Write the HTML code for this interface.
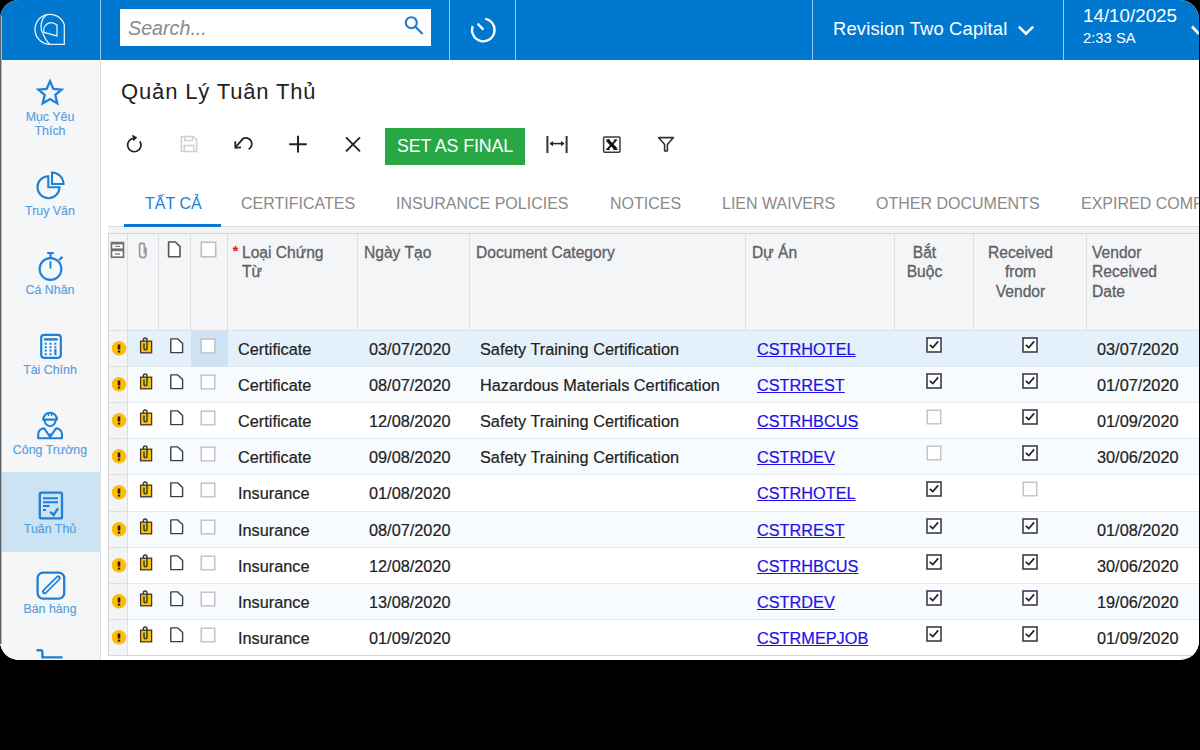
<!DOCTYPE html>
<html><head><meta charset="utf-8">
<style>
*{box-sizing:border-box;margin:0;padding:0}
html,body{width:1200px;height:750px;background:#000;overflow:hidden;font-family:"Liberation Sans",sans-serif}
.app{position:absolute;left:0;top:0;width:1199px;height:660px;border-radius:19px;overflow:hidden;background:#fff}
.abs{position:absolute}
.top{position:absolute;left:0;top:0;width:1199px;height:60px;background:#0078cf}
.vd{position:absolute;top:0;width:1px;height:60px;background:rgba(255,255,255,.6)}
.search{position:absolute;left:120px;top:9px;width:311px;height:37px;background:#fff}
.search span{position:absolute;left:8px;top:7.6px;font-size:19.7px;font-style:italic;color:#8a8a8a;white-space:nowrap}
.side{position:absolute;left:0;top:60px;width:101px;height:600px;background:#f5f6f8;border-right:1.5px solid #dcdfe4}
.si{position:absolute;left:0;width:100px;text-align:center;color:#559fdd;font-size:12.4px;line-height:14px;-webkit-text-stroke:0.15px #559fdd}
.main{position:absolute;left:101px;top:60px;width:1098px;height:600px;background:#fff}
.title{position:absolute;left:121px;top:79px;font-size:22px;letter-spacing:0.85px;color:#222;white-space:nowrap}
.btn{position:absolute;left:385px;top:128px;width:140px;height:37px;background:#28a745;color:#fff;font-size:17.8px;line-height:37px;text-align:center;white-space:nowrap;letter-spacing:-0.1px}
.tab{position:absolute;top:194.8px;font-size:16px;color:#8a8a8a;white-space:nowrap}
.hc{position:absolute;font-size:15.6px;color:#5e6064;line-height:19.4px;white-space:nowrap;-webkit-text-stroke:0.3px #5e6064}
.cell{position:absolute;font-size:16.3px;color:#222;white-space:nowrap;-webkit-text-stroke:0.2px #222}
.lnk{color:#1f10e8;text-decoration:underline;-webkit-text-stroke:0.2px #1f10e8}

</style></head>
<body>
<div class="app">
 <div class="top">
  <div class="vd" style="left:99.5px;width:1.5px"></div>
  <svg class="abs" style="left:32px;top:11px" width="36" height="36" viewBox="0 0 36 36">
   <path d="M32.3 13.8 A15 15 0 1 0 18 33.3 L32.3 33.3 Z" fill="none" stroke="#e6f0fa" stroke-width="1.3"/>
   <path d="M15 3.6 C8.6 7.5 7.6 17.5 11 22.5 C12.6 26.5 14.6 30.5 17.6 33.2" fill="none" stroke="#e6f0fa" stroke-width="1.3"/>
   <path d="M25 14.23 A7.63 7.63 0 0 0 12 21.5 L25 25 Z" fill="none" stroke="#e6f0fa" stroke-width="1.3"/>
  </svg>
  <div class="search"><span>Search...</span>
   <svg class="abs" style="left:282px;top:7px" width="24" height="24" viewBox="0 0 24 24"><circle cx="9.3" cy="6.7" r="5.5" fill="none" stroke="#1a7bcf" stroke-width="2.1"/><path d="M13.2 10.6 L20.6 18" stroke="#1a7bcf" stroke-width="2.1"/></svg>
  </div>
  <div class="vd" style="left:449px"></div>
  <svg class="abs" style="left:468px;top:14px" width="30" height="32" viewBox="0 0 30 32"><path d="M17.26 4.87 A11.3 11.3 0 1 1 4.68 12.14" fill="none" stroke="#fff" stroke-width="2.3"/><path d="M9.6 9.6 L15.4 15.6" stroke="#fff" stroke-width="2.3"/></svg>
  <div class="vd" style="left:515px"></div>
  <div class="vd" style="left:812px"></div>
  <div class="vd" style="left:1063px"></div>
  <div class="abs" style="left:833px;top:18px;font-size:18.4px;letter-spacing:0.15px;color:#fff;white-space:nowrap">Revision Two Capital</div>
  <svg class="abs" style="left:1016px;top:23px" width="20" height="14" viewBox="0 0 20 14"><path d="M2.8 3.6 L10 10.6 L17.2 3.6" fill="none" stroke="#fff" stroke-width="2.6"/></svg>
  <div class="abs" style="left:1083px;top:5px;font-size:18.8px;color:#fff;white-space:nowrap">14/10/2025</div>
  <div class="abs" style="left:1083px;top:29.5px;font-size:14.8px;color:#fff;white-space:nowrap">2:33 SA</div>
  <svg class="abs" style="left:1188px;top:22px" width="14" height="16" viewBox="0 0 14 16"><path d="M4 4.5 L11 12" fill="none" stroke="#fff" stroke-width="2.6"/></svg>
 </div>
 <div class="side"></div>
<svg class="abs" style="left:35.3px;top:78.8px" width="30" height="28" viewBox="0 0 30 28"><path d="M15 2.2 L18.4 9.9 L26.6 10.6 L20.3 16 L22.3 24.4 L15 20 L7.7 24.4 L9.7 16 L3.4 10.6 L11.6 9.9 Z" fill="none" stroke="#1e80d6" stroke-width="2.3" stroke-linejoin="miter"/></svg>
<div class="si" style="top:110px">Mục Yêu<br>Thích</div>
<svg class="abs" style="left:34px;top:168px" width="34" height="34" viewBox="0 0 34 34"><path d="M14.3 8.2 A11 11 0 1 0 25.5 19.3 L14.3 19.3 Z" fill="none" stroke="#1e80d6" stroke-width="2.1"/><path d="M18 4.5 A11.5 11.5 0 0 1 29.5 16 L18 16 Z" fill="none" stroke="#1e80d6" stroke-width="2.1"/></svg>
<div class="si" style="top:204px">Truy Vân</div>
<svg class="abs" style="left:35px;top:250px" width="32" height="32" viewBox="0 0 32 32"><circle cx="15.5" cy="19" r="10.9" fill="none" stroke="#1e80d6" stroke-width="2.1"/><path d="M12.2 3 H18.8 M15.5 3 V8" stroke="#1e80d6" stroke-width="2.2" fill="none"/><path d="M15.5 11.2 V18.6" stroke="#1e80d6" stroke-width="1.9"/><path d="M24.2 10 L27.4 6.8" stroke="#1e80d6" stroke-width="2.4"/></svg>
<div class="si" style="top:283px">Cá Nhân</div>
<svg class="abs" style="left:35px;top:330px" width="32" height="32" viewBox="0 0 32 32"><rect x="6.2" y="4.8" width="19.6" height="23" rx="3" fill="none" stroke="#1e80d6" stroke-width="2.2"/><rect x="9" y="8.2" width="13.8" height="2.4" fill="#1e80d6"/><rect x="9.700000000000003" y="12.75" width="2" height="2" fill="#1e80d6"/><rect x="9.700000000000003" y="16.19999999999999" width="2" height="2" fill="#1e80d6"/><rect x="9.700000000000003" y="19.600000000000023" width="2" height="2" fill="#1e80d6"/><rect x="9.700000000000003" y="23.19999999999999" width="2" height="2" fill="#1e80d6"/><rect x="14.5" y="12.75" width="2" height="2" fill="#1e80d6"/><rect x="14.5" y="16.19999999999999" width="2" height="2" fill="#1e80d6"/><rect x="14.5" y="19.600000000000023" width="2" height="2" fill="#1e80d6"/><rect x="14.5" y="23.19999999999999" width="2" height="2" fill="#1e80d6"/><rect x="19.299999999999997" y="12.75" width="2" height="2" fill="#1e80d6"/><rect x="19.299999999999997" y="16.19999999999999" width="2" height="2" fill="#1e80d6"/><rect x="19.299999999999997" y="19.100000000000023" width="2.2" height="6" fill="#1e80d6"/></svg>
<div class="si" style="top:363px">Tài Chính</div>
<svg class="abs" style="left:34px;top:408px" width="32" height="34" viewBox="0 0 32 34"><path d="M9.2 11.6 A6.9 6.9 0 0 1 23 11.6 Z" fill="none" stroke="#1e80d6" stroke-width="2.1" stroke-linejoin="round"/><path d="M14.6 4.4 V8 M17.6 4.4 V8" stroke="#1e80d6" stroke-width="1.4"/><path d="M10.6 12 A5.5 6.2 0 0 0 21.6 12" fill="none" stroke="#1e80d6" stroke-width="2"/><path d="M4.2 30.2 V26 A6 5.6 0 0 1 10.2 20.4 L16.1 29 L22 20.4 A6 5.6 0 0 1 28 26 V30.2 Z" fill="none" stroke="#1e80d6" stroke-width="2.1" stroke-linejoin="round"/><path d="M16.1 24.5 L14.6 27.8 L16.1 30 L17.6 27.8 Z" fill="#1e80d6"/></svg>
<div class="si" style="top:443px">Công Trường</div>
<div class="abs" style="left:0;top:472px;width:100px;height:80px;background:#cce3f4"></div>
<svg class="abs" style="left:35px;top:488px" width="32" height="34" viewBox="0 0 32 34"><rect x="4.8" y="4.6" width="22.2" height="25.8" rx="1.5" fill="none" stroke="#1e80d6" stroke-width="2.3"/><path d="M8 10.2 H23 M8 14.2 H23 M8 18 H14.6 M8 22 H11" stroke="#1e80d6" stroke-width="2"/><path d="M15.2 23.8 L18.6 27 L23 20.4" fill="none" stroke="#1e80d6" stroke-width="2.4"/></svg>
<div class="si" style="top:522px">Tuân Thủ</div>
<svg class="abs" style="left:34px;top:568px" width="34" height="34" viewBox="0 0 34 34"><rect x="3.6" y="4.6" width="26.6" height="26" rx="5.5" fill="none" stroke="#1e80d6" stroke-width="2.3"/><path d="M10.6 23.6 L24.2 10" stroke="#1e80d6" stroke-width="5.2" stroke-linecap="round"/><path d="M10.9 23.3 L23.9 10.3" stroke="#f5f6f8" stroke-width="1.8" stroke-linecap="round"/></svg>
<div class="si" style="top:602px">Bán hàng</div>
<svg class="abs" style="left:34px;top:646px" width="34" height="20" viewBox="0 0 34 20"><path d="M2.5 4.2 H6.6 Q8.4 4.2 8.4 6 V11.4 H28.6" fill="none" stroke="#1e80d6" stroke-width="2.4"/></svg>
 <div class="title">Quản Lý Tuân Thủ</div>
 <svg class="abs" style="left:124px;top:133px" width="22" height="22" viewBox="0 0 22 22"><path d="M15.85 8.25 A6.7 6.7 0 1 1 9.6 5.34 L11 5" fill="none" stroke="#222" stroke-width="1.7"/><path d="M8.2 1.6 L13.2 4.4 L9.4 8.2 Z" fill="#222"/></svg>
 <svg class="abs" style="left:179px;top:134px" width="20" height="20" viewBox="0 0 20 20"><path d="M2.4 2.4 H14.2 L17.6 5.8 V17.6 H2.4 Z" fill="none" stroke="#cfcfcf" stroke-width="1.5"/><path d="M5.6 2.4 V6.6 H13.6 V2.4 M5.2 17.6 V11.6 H14.8 V17.6" fill="none" stroke="#cfcfcf" stroke-width="1.5"/></svg>
 <svg class="abs" style="left:232px;top:134px" width="24" height="20" viewBox="0 0 24 20"><path d="M16.6 15.3 A6 6 0 1 0 10.8 4.8 L3.8 13" fill="none" stroke="#222" stroke-width="1.8"/><path d="M3.2 7.4 L3.4 13.8 L9 13.4" fill="none" stroke="#222" stroke-width="1.8"/></svg>
 <svg class="abs" style="left:288px;top:135px" width="20" height="19" viewBox="0 0 20 19"><path d="M1.2 9.2 H18.8 M10 0.8 V17.6" stroke="#222" stroke-width="2"/></svg>
 <svg class="abs" style="left:344px;top:136px" width="18" height="17" viewBox="0 0 18 17"><path d="M2 1.4 L16 15.4 M16 1.4 L2 15.4" stroke="#222" stroke-width="1.9"/></svg>
 <div class="btn">SET AS FINAL</div>
 <svg class="abs" style="left:545px;top:135px" width="24" height="19" viewBox="0 0 24 19"><path d="M2.4 1 V18 M21.6 1 V18" stroke="#333" stroke-width="2"/><path d="M5 8.6 H19" stroke="#222" stroke-width="1.5"/><path d="M4.6 8.6 L8 6 V11.2 Z M19.4 8.6 L16 6 V11.2 Z" fill="#222"/></svg>
 <svg class="abs" style="left:601px;top:135px" width="22" height="19" viewBox="0 0 22 19"><rect x="2.6" y="1.9" width="16.4" height="15.4" rx="1" fill="#fff" stroke="#3a3a44" stroke-width="1.5"/><path d="M6.4 5.2 L15 14.2" stroke="#111" stroke-width="3.2"/><path d="M15 5.2 L6.6 14.2" stroke="#111" stroke-width="1.8"/><path d="M5 5 H9 M12.6 5 H16.4 M5 14.4 H8.8 M12.6 14.4 H16.6" stroke="#111" stroke-width="1.2"/></svg>
 <svg class="abs" style="left:656px;top:135px" width="20" height="18" viewBox="0 0 20 18"><path d="M2.6 2.6 H17.4 L11.4 9.6 V16 H8.6 V9.6 Z" fill="none" stroke="#333" stroke-width="1.6" stroke-linejoin="round"/></svg>
 <div class="tab" style="left:145px;color:#1a7fd4">TẤT CẢ</div>
 <div class="tab" style="left:241px">CERTIFICATES</div>
 <div class="tab" style="left:396px">INSURANCE POLICIES</div>
 <div class="tab" style="left:610px">NOTICES</div>
 <div class="tab" style="left:722px">LIEN WAIVERS</div>
 <div class="tab" style="left:876px">OTHER DOCUMENTS</div>
 <div class="tab" style="left:1081px">EXPIRED COMPLIANCE</div>
 <div class="abs" style="left:108px;top:226px;width:1091px;height:1px;background:#d8dbe0"></div>
 <div class="abs" style="left:124px;top:224px;width:97px;height:3px;background:#0f74cc"></div>
 <div class="abs" style="left:108px;top:227px;width:1091px;height:6px;background:#f3f4f6"></div>
<div class="abs" style="left:108px;top:233px;width:1091px;height:98px;background:#f4f5f7;border-top:1.5px solid #d3d6da;border-bottom:1px solid #dcdfe3;border-left:1.5px solid #d3d6da"></div>
<div class="abs" style="left:127px;top:234px;width:1px;height:96px;background:#dcdfe3"></div>
<div class="abs" style="left:158px;top:234px;width:1px;height:96px;background:#dcdfe3"></div>
<div class="abs" style="left:190px;top:234px;width:1px;height:96px;background:#dcdfe3"></div>
<div class="abs" style="left:227px;top:234px;width:1px;height:96px;background:#dcdfe3"></div>
<div class="abs" style="left:357px;top:234px;width:1px;height:96px;background:#dcdfe3"></div>
<div class="abs" style="left:469px;top:234px;width:1px;height:96px;background:#dcdfe3"></div>
<div class="abs" style="left:745px;top:234px;width:1px;height:96px;background:#dcdfe3"></div>
<div class="abs" style="left:894px;top:234px;width:1px;height:96px;background:#dcdfe3"></div>
<div class="abs" style="left:973px;top:234px;width:1px;height:96px;background:#dcdfe3"></div>
<div class="abs" style="left:1086px;top:234px;width:1px;height:96px;background:#dcdfe3"></div>
<svg class="abs" style="left:110px;top:241px" width="16" height="18" viewBox="0 0 16 18"><rect x="1.5" y="1.6" width="12" height="14.6" fill="#fff" stroke="#707070" stroke-width="1.7"/><rect x="1.5" y="1" width="12" height="2.4" fill="#707070"/><rect x="1.5" y="7.4" width="12" height="2.8" fill="#707070"/><path d="M5 5.4 H10 M5 13 H10" stroke="#888" stroke-width="1.3"/></svg>
<svg class="abs" style="left:136px;top:241px" width="14" height="18" viewBox="0 0 14 18"><path d="M10 6.4 V13.4 A3.2 3.2 0 0 1 3.6 13.4 V4.6 A2.4 2.4 0 0 1 8.4 4.6 V12.4" fill="none" stroke="#9a98a0" stroke-width="1.7"/></svg>
<svg class="abs" style="left:166px;top:240px" width="17" height="19" viewBox="0 0 17 19"><path d="M2.6 2 H9.4 L14 6.6 V16.8 H2.6 Z" fill="#fff" stroke="#555" stroke-width="1.6" stroke-linejoin="round"/></svg>
<svg class="abs" style="left:200px;top:241px" width="17" height="17" viewBox="0 0 17 17"><rect x="1.3" y="1.3" width="14.4" height="14.4" fill="#fff" stroke="#bdbdbd" stroke-width="1.6"/></svg>
<div class="hc" style="left:242px;top:242.7px">Loại Chứng<br>Từ</div><div class="abs" style="left:232.5px;top:242px;color:#e8141c;font-size:15px;font-weight:bold">*</div>
<div class="hc" style="left:364px;top:242.7px">Ngày Tạo</div>
<div class="hc" style="left:476px;top:242.7px">Document Category</div>
<div class="hc" style="left:752px;top:242.7px">Dự Án</div>
<div class="hc" style="left:894px;width:61px;text-align:center;top:242.7px">Bắt<br>Buộc</div>
<div class="hc" style="left:973px;width:95px;text-align:center;top:242.7px">Received<br>from<br>Vendor</div>
<div class="hc" style="left:1092px;top:242.7px">Vendor<br>Received<br>Date</div>
<div class="abs" style="left:108px;top:331px;width:1091px;height:36px;background:#e5f1fa;border-bottom:1px solid #e3ebf2"></div>
<div class="abs" style="left:108px;top:331px;width:20px;height:36px;background:#f3f4f6;border-right:1px solid #dcdfe3;border-bottom:1px solid #dcdfe3;border-left:1.5px solid #d3d6da"></div>
<div class="abs" style="left:191px;top:331px;width:37px;height:36px;background:#cde2f2"></div>
<svg class="abs" style="left:110.5px;top:340.3px" width="16" height="16" viewBox="0 0 16 16"><circle cx="8" cy="8.3" r="7.3" fill="#fcbd08"/><rect x="6.7" y="4.5" width="2.6" height="5" fill="#2a1a10"/><rect x="6.8" y="10.6" width="2.4" height="2" fill="#2a1a10"/></svg>
<svg class="abs" style="left:137.5px;top:336.3px" width="16" height="18" viewBox="0 0 16 18"><rect x="2.6" y="5.2" width="11" height="11.6" fill="#f9c312" stroke="#4a3238" stroke-width="1.3"/><path d="M5.4 5.2 V3.8 A1.8 1.8 0 0 1 9 3.8 V12.2 A1.5 1.5 0 0 1 6 12.2 V7.6" fill="none" stroke="#34401f" stroke-width="1.5"/></svg>
<svg class="abs" style="left:168px;top:337.3px" width="16" height="18" viewBox="0 0 16 18"><path d="M2.8 1.9 H9.8 L14.6 6.4 V15.6 H2.8 Z" fill="#fff" stroke="#3d3d46" stroke-width="1.4" stroke-linejoin="round"/></svg>
<svg class="abs" style="left:200px;top:337.5px" width="16" height="16" viewBox="0 0 16 16"><rect x="1.2" y="1.2" width="13.6" height="13.6" fill="#fff" stroke="#babcc0" stroke-width="1.3"/></svg>
<div class="cell" style="left:238px;top:340.3px">Certificate</div>
<div class="cell" style="left:369px;top:340.3px">03/07/2020</div>
<div class="cell" style="left:480px;top:340.3px">Safety Training Certification</div>
<div class="cell lnk" style="left:757px;top:340.3px">CSTRHOTEL</div>
<svg class="abs" style="left:926px;top:337px" width="16" height="16" viewBox="0 0 16 16"><rect x="1" y="1" width="14" height="14" fill="#fff" stroke="#3c3c4a" stroke-width="1.6"/><path d="M3.8 7.8 L6.8 10.6 L12.2 4.4" fill="none" stroke="#222" stroke-width="1.7"/></svg>
<svg class="abs" style="left:1021.5px;top:337px" width="16" height="16" viewBox="0 0 16 16"><rect x="1" y="1" width="14" height="14" fill="#fff" stroke="#3c3c4a" stroke-width="1.6"/><path d="M3.8 7.8 L6.8 10.6 L12.2 4.4" fill="none" stroke="#222" stroke-width="1.7"/></svg>
<div class="cell" style="left:1097px;top:340.3px">03/07/2020</div>
<div class="abs" style="left:108px;top:367px;width:1091px;height:36px;background:#f7fbfe;border-bottom:1px solid #e3ebf2"></div>
<div class="abs" style="left:108px;top:367px;width:20px;height:36px;background:#f3f4f6;border-right:1px solid #dcdfe3;border-bottom:1px solid #dcdfe3;border-left:1.5px solid #d3d6da"></div>
<svg class="abs" style="left:110.5px;top:376.3px" width="16" height="16" viewBox="0 0 16 16"><circle cx="8" cy="8.3" r="7.3" fill="#fcbd08"/><rect x="6.7" y="4.5" width="2.6" height="5" fill="#2a1a10"/><rect x="6.8" y="10.6" width="2.4" height="2" fill="#2a1a10"/></svg>
<svg class="abs" style="left:137.5px;top:372.3px" width="16" height="18" viewBox="0 0 16 18"><rect x="2.6" y="5.2" width="11" height="11.6" fill="#f9c312" stroke="#4a3238" stroke-width="1.3"/><path d="M5.4 5.2 V3.8 A1.8 1.8 0 0 1 9 3.8 V12.2 A1.5 1.5 0 0 1 6 12.2 V7.6" fill="none" stroke="#34401f" stroke-width="1.5"/></svg>
<svg class="abs" style="left:168px;top:373.3px" width="16" height="18" viewBox="0 0 16 18"><path d="M2.8 1.9 H9.8 L14.6 6.4 V15.6 H2.8 Z" fill="#fff" stroke="#3d3d46" stroke-width="1.4" stroke-linejoin="round"/></svg>
<svg class="abs" style="left:200px;top:373.5px" width="16" height="16" viewBox="0 0 16 16"><rect x="1.2" y="1.2" width="13.6" height="13.6" fill="#fff" stroke="#babcc0" stroke-width="1.3"/></svg>
<div class="cell" style="left:238px;top:376.3px">Certificate</div>
<div class="cell" style="left:369px;top:376.3px">08/07/2020</div>
<div class="cell" style="left:480px;top:376.3px">Hazardous Materials Certification</div>
<div class="cell lnk" style="left:757px;top:376.3px">CSTRREST</div>
<svg class="abs" style="left:926px;top:373px" width="16" height="16" viewBox="0 0 16 16"><rect x="1" y="1" width="14" height="14" fill="#fff" stroke="#3c3c4a" stroke-width="1.6"/><path d="M3.8 7.8 L6.8 10.6 L12.2 4.4" fill="none" stroke="#222" stroke-width="1.7"/></svg>
<svg class="abs" style="left:1021.5px;top:373px" width="16" height="16" viewBox="0 0 16 16"><rect x="1" y="1" width="14" height="14" fill="#fff" stroke="#3c3c4a" stroke-width="1.6"/><path d="M3.8 7.8 L6.8 10.6 L12.2 4.4" fill="none" stroke="#222" stroke-width="1.7"/></svg>
<div class="cell" style="left:1097px;top:376.3px">01/07/2020</div>
<div class="abs" style="left:108px;top:403px;width:1091px;height:36px;background:#ffffff;border-bottom:1px solid #e3ebf2"></div>
<div class="abs" style="left:108px;top:403px;width:20px;height:36px;background:#f3f4f6;border-right:1px solid #dcdfe3;border-bottom:1px solid #dcdfe3;border-left:1.5px solid #d3d6da"></div>
<svg class="abs" style="left:110.5px;top:412.3px" width="16" height="16" viewBox="0 0 16 16"><circle cx="8" cy="8.3" r="7.3" fill="#fcbd08"/><rect x="6.7" y="4.5" width="2.6" height="5" fill="#2a1a10"/><rect x="6.8" y="10.6" width="2.4" height="2" fill="#2a1a10"/></svg>
<svg class="abs" style="left:137.5px;top:408.3px" width="16" height="18" viewBox="0 0 16 18"><rect x="2.6" y="5.2" width="11" height="11.6" fill="#f9c312" stroke="#4a3238" stroke-width="1.3"/><path d="M5.4 5.2 V3.8 A1.8 1.8 0 0 1 9 3.8 V12.2 A1.5 1.5 0 0 1 6 12.2 V7.6" fill="none" stroke="#34401f" stroke-width="1.5"/></svg>
<svg class="abs" style="left:168px;top:409.3px" width="16" height="18" viewBox="0 0 16 18"><path d="M2.8 1.9 H9.8 L14.6 6.4 V15.6 H2.8 Z" fill="#fff" stroke="#3d3d46" stroke-width="1.4" stroke-linejoin="round"/></svg>
<svg class="abs" style="left:200px;top:409.5px" width="16" height="16" viewBox="0 0 16 16"><rect x="1.2" y="1.2" width="13.6" height="13.6" fill="#fff" stroke="#babcc0" stroke-width="1.3"/></svg>
<div class="cell" style="left:238px;top:412.3px">Certificate</div>
<div class="cell" style="left:369px;top:412.3px">12/08/2020</div>
<div class="cell" style="left:480px;top:412.3px">Safety Training Certification</div>
<div class="cell lnk" style="left:757px;top:412.3px">CSTRHBCUS</div>
<svg class="abs" style="left:926px;top:409px" width="16" height="16" viewBox="0 0 16 16"><rect x="1.2" y="1.2" width="13.6" height="13.6" fill="#fff" stroke="#babcc0" stroke-width="1.3"/></svg>
<svg class="abs" style="left:1021.5px;top:409px" width="16" height="16" viewBox="0 0 16 16"><rect x="1" y="1" width="14" height="14" fill="#fff" stroke="#3c3c4a" stroke-width="1.6"/><path d="M3.8 7.8 L6.8 10.6 L12.2 4.4" fill="none" stroke="#222" stroke-width="1.7"/></svg>
<div class="cell" style="left:1097px;top:412.3px">01/09/2020</div>
<div class="abs" style="left:108px;top:439px;width:1091px;height:36px;background:#f7fbfe;border-bottom:1px solid #e3ebf2"></div>
<div class="abs" style="left:108px;top:439px;width:20px;height:36px;background:#f3f4f6;border-right:1px solid #dcdfe3;border-bottom:1px solid #dcdfe3;border-left:1.5px solid #d3d6da"></div>
<svg class="abs" style="left:110.5px;top:448.3px" width="16" height="16" viewBox="0 0 16 16"><circle cx="8" cy="8.3" r="7.3" fill="#fcbd08"/><rect x="6.7" y="4.5" width="2.6" height="5" fill="#2a1a10"/><rect x="6.8" y="10.6" width="2.4" height="2" fill="#2a1a10"/></svg>
<svg class="abs" style="left:137.5px;top:444.3px" width="16" height="18" viewBox="0 0 16 18"><rect x="2.6" y="5.2" width="11" height="11.6" fill="#f9c312" stroke="#4a3238" stroke-width="1.3"/><path d="M5.4 5.2 V3.8 A1.8 1.8 0 0 1 9 3.8 V12.2 A1.5 1.5 0 0 1 6 12.2 V7.6" fill="none" stroke="#34401f" stroke-width="1.5"/></svg>
<svg class="abs" style="left:168px;top:445.3px" width="16" height="18" viewBox="0 0 16 18"><path d="M2.8 1.9 H9.8 L14.6 6.4 V15.6 H2.8 Z" fill="#fff" stroke="#3d3d46" stroke-width="1.4" stroke-linejoin="round"/></svg>
<svg class="abs" style="left:200px;top:445.5px" width="16" height="16" viewBox="0 0 16 16"><rect x="1.2" y="1.2" width="13.6" height="13.6" fill="#fff" stroke="#babcc0" stroke-width="1.3"/></svg>
<div class="cell" style="left:238px;top:448.3px">Certificate</div>
<div class="cell" style="left:369px;top:448.3px">09/08/2020</div>
<div class="cell" style="left:480px;top:448.3px">Safety Training Certification</div>
<div class="cell lnk" style="left:757px;top:448.3px">CSTRDEV</div>
<svg class="abs" style="left:926px;top:445px" width="16" height="16" viewBox="0 0 16 16"><rect x="1.2" y="1.2" width="13.6" height="13.6" fill="#fff" stroke="#babcc0" stroke-width="1.3"/></svg>
<svg class="abs" style="left:1021.5px;top:445px" width="16" height="16" viewBox="0 0 16 16"><rect x="1" y="1" width="14" height="14" fill="#fff" stroke="#3c3c4a" stroke-width="1.6"/><path d="M3.8 7.8 L6.8 10.6 L12.2 4.4" fill="none" stroke="#222" stroke-width="1.7"/></svg>
<div class="cell" style="left:1097px;top:448.3px">30/06/2020</div>
<div class="abs" style="left:108px;top:475px;width:1091px;height:37px;background:#ffffff;border-bottom:1px solid #e3ebf2"></div>
<div class="abs" style="left:108px;top:475px;width:20px;height:37px;background:#f3f4f6;border-right:1px solid #dcdfe3;border-bottom:1px solid #dcdfe3;border-left:1.5px solid #d3d6da"></div>
<svg class="abs" style="left:110.5px;top:484.3px" width="16" height="16" viewBox="0 0 16 16"><circle cx="8" cy="8.3" r="7.3" fill="#fcbd08"/><rect x="6.7" y="4.5" width="2.6" height="5" fill="#2a1a10"/><rect x="6.8" y="10.6" width="2.4" height="2" fill="#2a1a10"/></svg>
<svg class="abs" style="left:137.5px;top:480.3px" width="16" height="18" viewBox="0 0 16 18"><rect x="2.6" y="5.2" width="11" height="11.6" fill="#f9c312" stroke="#4a3238" stroke-width="1.3"/><path d="M5.4 5.2 V3.8 A1.8 1.8 0 0 1 9 3.8 V12.2 A1.5 1.5 0 0 1 6 12.2 V7.6" fill="none" stroke="#34401f" stroke-width="1.5"/></svg>
<svg class="abs" style="left:168px;top:481.3px" width="16" height="18" viewBox="0 0 16 18"><path d="M2.8 1.9 H9.8 L14.6 6.4 V15.6 H2.8 Z" fill="#fff" stroke="#3d3d46" stroke-width="1.4" stroke-linejoin="round"/></svg>
<svg class="abs" style="left:200px;top:481.5px" width="16" height="16" viewBox="0 0 16 16"><rect x="1.2" y="1.2" width="13.6" height="13.6" fill="#fff" stroke="#babcc0" stroke-width="1.3"/></svg>
<div class="cell" style="left:238px;top:484.3px">Insurance</div>
<div class="cell" style="left:369px;top:484.3px">01/08/2020</div>
<div class="cell lnk" style="left:757px;top:484.3px">CSTRHOTEL</div>
<svg class="abs" style="left:926px;top:481px" width="16" height="16" viewBox="0 0 16 16"><rect x="1" y="1" width="14" height="14" fill="#fff" stroke="#3c3c4a" stroke-width="1.6"/><path d="M3.8 7.8 L6.8 10.6 L12.2 4.4" fill="none" stroke="#222" stroke-width="1.7"/></svg>
<svg class="abs" style="left:1021.5px;top:481px" width="16" height="16" viewBox="0 0 16 16"><rect x="1.2" y="1.2" width="13.6" height="13.6" fill="#fff" stroke="#babcc0" stroke-width="1.3"/></svg>
<div class="abs" style="left:108px;top:512px;width:1091px;height:36px;background:#f7fbfe;border-bottom:1px solid #e3ebf2"></div>
<div class="abs" style="left:108px;top:512px;width:20px;height:36px;background:#f3f4f6;border-right:1px solid #dcdfe3;border-bottom:1px solid #dcdfe3;border-left:1.5px solid #d3d6da"></div>
<svg class="abs" style="left:110.5px;top:521.3px" width="16" height="16" viewBox="0 0 16 16"><circle cx="8" cy="8.3" r="7.3" fill="#fcbd08"/><rect x="6.7" y="4.5" width="2.6" height="5" fill="#2a1a10"/><rect x="6.8" y="10.6" width="2.4" height="2" fill="#2a1a10"/></svg>
<svg class="abs" style="left:137.5px;top:517.3px" width="16" height="18" viewBox="0 0 16 18"><rect x="2.6" y="5.2" width="11" height="11.6" fill="#f9c312" stroke="#4a3238" stroke-width="1.3"/><path d="M5.4 5.2 V3.8 A1.8 1.8 0 0 1 9 3.8 V12.2 A1.5 1.5 0 0 1 6 12.2 V7.6" fill="none" stroke="#34401f" stroke-width="1.5"/></svg>
<svg class="abs" style="left:168px;top:518.3px" width="16" height="18" viewBox="0 0 16 18"><path d="M2.8 1.9 H9.8 L14.6 6.4 V15.6 H2.8 Z" fill="#fff" stroke="#3d3d46" stroke-width="1.4" stroke-linejoin="round"/></svg>
<svg class="abs" style="left:200px;top:518.5px" width="16" height="16" viewBox="0 0 16 16"><rect x="1.2" y="1.2" width="13.6" height="13.6" fill="#fff" stroke="#babcc0" stroke-width="1.3"/></svg>
<div class="cell" style="left:238px;top:521.3px">Insurance</div>
<div class="cell" style="left:369px;top:521.3px">08/07/2020</div>
<div class="cell lnk" style="left:757px;top:521.3px">CSTRREST</div>
<svg class="abs" style="left:926px;top:518px" width="16" height="16" viewBox="0 0 16 16"><rect x="1" y="1" width="14" height="14" fill="#fff" stroke="#3c3c4a" stroke-width="1.6"/><path d="M3.8 7.8 L6.8 10.6 L12.2 4.4" fill="none" stroke="#222" stroke-width="1.7"/></svg>
<svg class="abs" style="left:1021.5px;top:518px" width="16" height="16" viewBox="0 0 16 16"><rect x="1" y="1" width="14" height="14" fill="#fff" stroke="#3c3c4a" stroke-width="1.6"/><path d="M3.8 7.8 L6.8 10.6 L12.2 4.4" fill="none" stroke="#222" stroke-width="1.7"/></svg>
<div class="cell" style="left:1097px;top:521.3px">01/08/2020</div>
<div class="abs" style="left:108px;top:548px;width:1091px;height:36px;background:#ffffff;border-bottom:1px solid #e3ebf2"></div>
<div class="abs" style="left:108px;top:548px;width:20px;height:36px;background:#f3f4f6;border-right:1px solid #dcdfe3;border-bottom:1px solid #dcdfe3;border-left:1.5px solid #d3d6da"></div>
<svg class="abs" style="left:110.5px;top:557.3px" width="16" height="16" viewBox="0 0 16 16"><circle cx="8" cy="8.3" r="7.3" fill="#fcbd08"/><rect x="6.7" y="4.5" width="2.6" height="5" fill="#2a1a10"/><rect x="6.8" y="10.6" width="2.4" height="2" fill="#2a1a10"/></svg>
<svg class="abs" style="left:137.5px;top:553.3px" width="16" height="18" viewBox="0 0 16 18"><rect x="2.6" y="5.2" width="11" height="11.6" fill="#f9c312" stroke="#4a3238" stroke-width="1.3"/><path d="M5.4 5.2 V3.8 A1.8 1.8 0 0 1 9 3.8 V12.2 A1.5 1.5 0 0 1 6 12.2 V7.6" fill="none" stroke="#34401f" stroke-width="1.5"/></svg>
<svg class="abs" style="left:168px;top:554.3px" width="16" height="18" viewBox="0 0 16 18"><path d="M2.8 1.9 H9.8 L14.6 6.4 V15.6 H2.8 Z" fill="#fff" stroke="#3d3d46" stroke-width="1.4" stroke-linejoin="round"/></svg>
<svg class="abs" style="left:200px;top:554.5px" width="16" height="16" viewBox="0 0 16 16"><rect x="1.2" y="1.2" width="13.6" height="13.6" fill="#fff" stroke="#babcc0" stroke-width="1.3"/></svg>
<div class="cell" style="left:238px;top:557.3px">Insurance</div>
<div class="cell" style="left:369px;top:557.3px">12/08/2020</div>
<div class="cell lnk" style="left:757px;top:557.3px">CSTRHBCUS</div>
<svg class="abs" style="left:926px;top:554px" width="16" height="16" viewBox="0 0 16 16"><rect x="1" y="1" width="14" height="14" fill="#fff" stroke="#3c3c4a" stroke-width="1.6"/><path d="M3.8 7.8 L6.8 10.6 L12.2 4.4" fill="none" stroke="#222" stroke-width="1.7"/></svg>
<svg class="abs" style="left:1021.5px;top:554px" width="16" height="16" viewBox="0 0 16 16"><rect x="1" y="1" width="14" height="14" fill="#fff" stroke="#3c3c4a" stroke-width="1.6"/><path d="M3.8 7.8 L6.8 10.6 L12.2 4.4" fill="none" stroke="#222" stroke-width="1.7"/></svg>
<div class="cell" style="left:1097px;top:557.3px">30/06/2020</div>
<div class="abs" style="left:108px;top:584px;width:1091px;height:36px;background:#f7fbfe;border-bottom:1px solid #e3ebf2"></div>
<div class="abs" style="left:108px;top:584px;width:20px;height:36px;background:#f3f4f6;border-right:1px solid #dcdfe3;border-bottom:1px solid #dcdfe3;border-left:1.5px solid #d3d6da"></div>
<svg class="abs" style="left:110.5px;top:593.3px" width="16" height="16" viewBox="0 0 16 16"><circle cx="8" cy="8.3" r="7.3" fill="#fcbd08"/><rect x="6.7" y="4.5" width="2.6" height="5" fill="#2a1a10"/><rect x="6.8" y="10.6" width="2.4" height="2" fill="#2a1a10"/></svg>
<svg class="abs" style="left:137.5px;top:589.3px" width="16" height="18" viewBox="0 0 16 18"><rect x="2.6" y="5.2" width="11" height="11.6" fill="#f9c312" stroke="#4a3238" stroke-width="1.3"/><path d="M5.4 5.2 V3.8 A1.8 1.8 0 0 1 9 3.8 V12.2 A1.5 1.5 0 0 1 6 12.2 V7.6" fill="none" stroke="#34401f" stroke-width="1.5"/></svg>
<svg class="abs" style="left:168px;top:590.3px" width="16" height="18" viewBox="0 0 16 18"><path d="M2.8 1.9 H9.8 L14.6 6.4 V15.6 H2.8 Z" fill="#fff" stroke="#3d3d46" stroke-width="1.4" stroke-linejoin="round"/></svg>
<svg class="abs" style="left:200px;top:590.5px" width="16" height="16" viewBox="0 0 16 16"><rect x="1.2" y="1.2" width="13.6" height="13.6" fill="#fff" stroke="#babcc0" stroke-width="1.3"/></svg>
<div class="cell" style="left:238px;top:593.3px">Insurance</div>
<div class="cell" style="left:369px;top:593.3px">13/08/2020</div>
<div class="cell lnk" style="left:757px;top:593.3px">CSTRDEV</div>
<svg class="abs" style="left:926px;top:590px" width="16" height="16" viewBox="0 0 16 16"><rect x="1" y="1" width="14" height="14" fill="#fff" stroke="#3c3c4a" stroke-width="1.6"/><path d="M3.8 7.8 L6.8 10.6 L12.2 4.4" fill="none" stroke="#222" stroke-width="1.7"/></svg>
<svg class="abs" style="left:1021.5px;top:590px" width="16" height="16" viewBox="0 0 16 16"><rect x="1" y="1" width="14" height="14" fill="#fff" stroke="#3c3c4a" stroke-width="1.6"/><path d="M3.8 7.8 L6.8 10.6 L12.2 4.4" fill="none" stroke="#222" stroke-width="1.7"/></svg>
<div class="cell" style="left:1097px;top:593.3px">19/06/2020</div>
<div class="abs" style="left:108px;top:620px;width:1091px;height:36px;background:#ffffff;border-bottom:1px solid #e3ebf2"></div>
<div class="abs" style="left:108px;top:620px;width:20px;height:36px;background:#f3f4f6;border-right:1px solid #dcdfe3;border-bottom:1px solid #dcdfe3;border-left:1.5px solid #d3d6da"></div>
<svg class="abs" style="left:110.5px;top:629.3px" width="16" height="16" viewBox="0 0 16 16"><circle cx="8" cy="8.3" r="7.3" fill="#fcbd08"/><rect x="6.7" y="4.5" width="2.6" height="5" fill="#2a1a10"/><rect x="6.8" y="10.6" width="2.4" height="2" fill="#2a1a10"/></svg>
<svg class="abs" style="left:137.5px;top:625.3px" width="16" height="18" viewBox="0 0 16 18"><rect x="2.6" y="5.2" width="11" height="11.6" fill="#f9c312" stroke="#4a3238" stroke-width="1.3"/><path d="M5.4 5.2 V3.8 A1.8 1.8 0 0 1 9 3.8 V12.2 A1.5 1.5 0 0 1 6 12.2 V7.6" fill="none" stroke="#34401f" stroke-width="1.5"/></svg>
<svg class="abs" style="left:168px;top:626.3px" width="16" height="18" viewBox="0 0 16 18"><path d="M2.8 1.9 H9.8 L14.6 6.4 V15.6 H2.8 Z" fill="#fff" stroke="#3d3d46" stroke-width="1.4" stroke-linejoin="round"/></svg>
<svg class="abs" style="left:200px;top:626.5px" width="16" height="16" viewBox="0 0 16 16"><rect x="1.2" y="1.2" width="13.6" height="13.6" fill="#fff" stroke="#babcc0" stroke-width="1.3"/></svg>
<div class="cell" style="left:238px;top:629.3px">Insurance</div>
<div class="cell" style="left:369px;top:629.3px">01/09/2020</div>
<div class="cell lnk" style="left:757px;top:629.3px">CSTRMEPJOB</div>
<svg class="abs" style="left:926px;top:626px" width="16" height="16" viewBox="0 0 16 16"><rect x="1" y="1" width="14" height="14" fill="#fff" stroke="#3c3c4a" stroke-width="1.6"/><path d="M3.8 7.8 L6.8 10.6 L12.2 4.4" fill="none" stroke="#222" stroke-width="1.7"/></svg>
<svg class="abs" style="left:1021.5px;top:626px" width="16" height="16" viewBox="0 0 16 16"><rect x="1" y="1" width="14" height="14" fill="#fff" stroke="#3c3c4a" stroke-width="1.6"/><path d="M3.8 7.8 L6.8 10.6 L12.2 4.4" fill="none" stroke="#222" stroke-width="1.7"/></svg>
<div class="cell" style="left:1097px;top:629.3px">01/09/2020</div>
<div class="abs" style="left:108px;top:655px;width:1091px;height:1px;background:#d6d8dc"></div>
</div>
<div class="abs" style="left:0;top:16px;width:1px;height:628px;background:#5c6166"></div><div class="abs" style="left:1px;top:16px;width:1px;height:628px;background:#b3b7bb"></div>
</body></html>
